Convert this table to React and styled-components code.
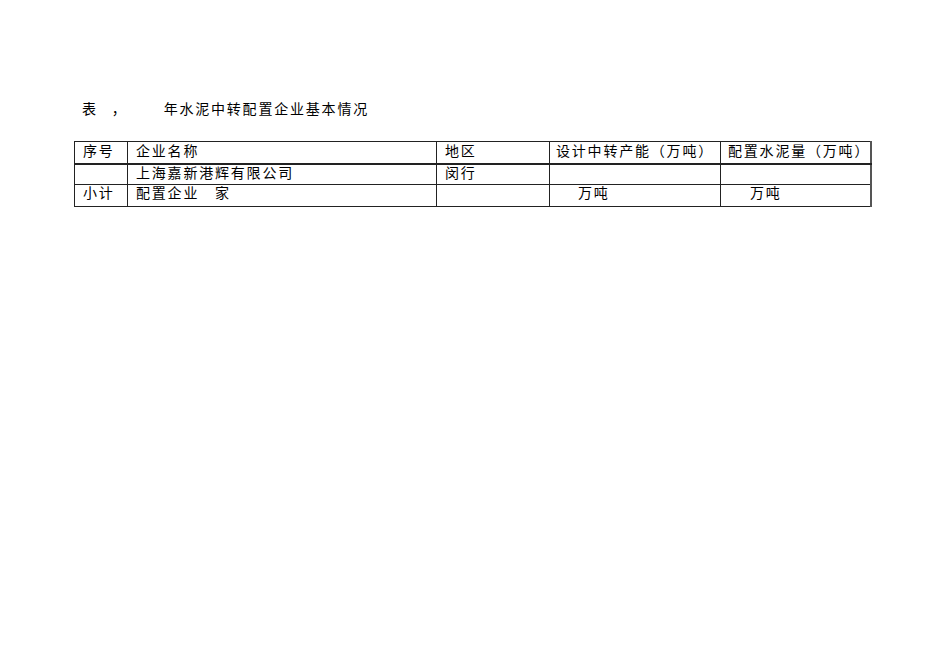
import styled, { createGlobalStyle } from "styled-components";

const GlobalStyle = createGlobalStyle`
  html, body {
    margin: 0;
    padding: 0;
    background: #ffffff;
  }
  body {
    font-family: "Noto Sans CJK SC", "Liberation Serif", serif;
    color: #000;
  }
`;

const Page = styled.main`
  width: 950px;
  height: 672px;
  padding: 98px 0 0 74px;
  box-sizing: border-box;
`;

const Title = styled.h1`
  margin: 0 0 23px 8px;
  display: flex;
  font-size: 14px;
  font-weight: 400;
  line-height: 20px;
  letter-spacing: 1.8px;
  white-space: pre;
`;

const TitleGap = styled.span`
  display: inline-block;
  width: ${(p) => p.$w}px;
`;

const Table = styled.table`
  border-collapse: collapse;
  table-layout: fixed;
  width: 796px;
  font-size: 14px;
  letter-spacing: 1.8px;
  border-right: 2px solid #555;
`;

const Col = styled.col`
  width: ${(p) => p.$w}px;
`;

const Cell = styled.td`
  box-sizing: border-box;
  height: ${(p) => p.$h || 21}px;
  padding: ${(p) => p.$top || 0}px 0 0 ${(p) => p.$pad || 8}px;
  border: 1px solid #222;
  vertical-align: top;
  line-height: 15px;
  white-space: pre;
`;

const HeadRow = styled.tr`
  border-bottom: 2px solid #222;
`;

const cols = [53, 309, 113, 171, 150];

export default function App() {
  return (
    <>
      <GlobalStyle />
      <Page>
        <Title>
          表<TitleGap $w={14} />，<TitleGap $w={36} />年水泥中转配置企业基本情况
        </Title>
        <Table>
          <colgroup>
            {cols.map((w, i) => (
              <Col key={i} $w={w} />
            ))}
          </colgroup>
          <tbody>
            <HeadRow>
              <Cell $h={22} $top={1}>序号</Cell>
              <Cell $top={1}>企业名称</Cell>
              <Cell $top={1}>地区</Cell>
              <Cell $top={1} $pad={6}>设计中转产能（万吨）</Cell>
              <Cell $top={1} $pad={7}>配置水泥量（万吨）</Cell>
            </HeadRow>
            <tr>
              <Cell></Cell>
              <Cell>上海嘉新港辉有限公司</Cell>
              <Cell>闵行</Cell>
              <Cell></Cell>
              <Cell></Cell>
            </tr>
            <tr>
              <Cell $h={22}>小计</Cell>
              <Cell>配置企业　家</Cell>
              <Cell></Cell>
              <Cell $pad={28}>万吨</Cell>
              <Cell $pad={29}>万吨</Cell>
            </tr>
          </tbody>
        </Table>
      </Page>
    </>
  );
}
